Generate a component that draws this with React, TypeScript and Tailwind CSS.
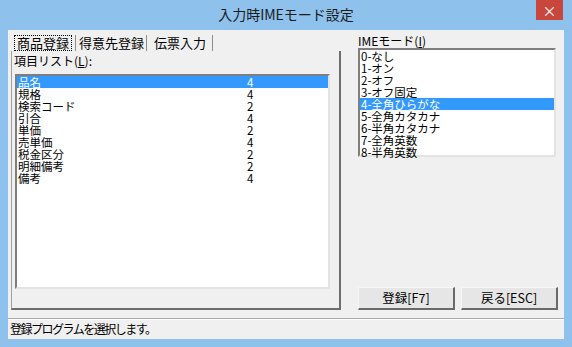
import React from "react";

const leftItems: [string, string][] = [
  ["品名", "4"],
  ["規格", "4"],
  ["検索コード", "2"],
  ["引合", "4"],
  ["単価", "2"],
  ["売単価", "4"],
  ["税金区分", "2"],
  ["明細備考", "2"],
  ["備考", "4"],
];

const rightItems = [
  "0-なし",
  "1-オン",
  "2-オフ",
  "3-オフ固定",
  "4-全角ひらがな",
  "5-全角カタカナ",
  "6-半角カタカナ",
  "7-全角英数",
  "8-半角英数",
];

const font = { fontFamily: '"Noto Sans CJK JP", "Noto Sans", sans-serif' };

export default function App() {
  return (
    <div
      className="w-[572px] h-[347px] bg-[#8ec1ec] flex flex-col overflow-hidden text-black"
      style={font}
    >
      {/* title bar */}
      <div className="h-[30px] flex items-start relative">
        <div className="flex-1 h-[28px] flex items-center justify-center text-[14px] text-[#1b1b1b]">
          入力時IMEモード設定
        </div>
        <div className="absolute right-[9px] top-0 w-[27px] h-[20px] bg-[#c9463d] flex items-center justify-center text-white text-[14px] leading-none">
          ×
        </div>
      </div>

      {/* client */}
      <div className="mx-[8px] h-[309px] bg-[#f0f0f0] flex flex-col">
        <div className="h-[288px] flex">
          {/* left column */}
          <div className="ml-[3px] w-[330px] pt-[5px] flex flex-col">
            <div className="h-[16px] flex pl-[3px] text-[13px] leading-[14px]">
              <div className="w-[62px] h-[16px] border-r border-[#8c8c8c] flex items-center pr-[2px]">
                <span className="border border-dotted border-black px-[2px] h-[16px] flex items-center">
                  商品登録
                </span>
              </div>
              <div className="w-[71px] h-[16px] border-r border-[#8c8c8c] flex items-center pl-[3px]">
                得意先登録
              </div>
              <div className="w-[66px] h-[16px] border-r border-[#8c8c8c] flex items-center pl-[7px]">
                伝票入力
              </div>
            </div>
            <div className="h-[259px] border-l border-[#a0a0a0] border-r-2 border-r-[#6d6d6d] border-b-2 border-b-[#6d6d6d] flex flex-col">
              <div className="pt-[3px] pl-[2px] h-[23px] text-[12px] leading-[13px]">
                項目リスト(<span className="underline">L</span>):
              </div>
              <div className="ml-[3px] w-[315px] h-[215px] bg-white border-2 border-t-[#7e7e7e] border-l-[#7e7e7e] border-r-[#e3e3e3] border-b-[#e3e3e3] text-[11.5px] leading-[12px]">
                {leftItems.map(([n, v], i) => (
                  <div
                    key={n}
                    className={
                      i === 0
                        ? "h-[12px] flex bg-[#3399ff] text-white"
                        : "h-[12px] flex"
                    }
                  >
                    <span className="w-[230px] pl-[1px]">{n}</span>
                    <span>{v}</span>
                  </div>
                ))}
              </div>
            </div>
          </div>

          {/* right column */}
          <div className="ml-[17px] pt-[5px] flex flex-col">
            <div className="h-[13px] text-[12px] leading-[12px]">
              IMEモード(<span className="underline">I</span>)
            </div>
            <div className="w-[198px] h-[109px] bg-white border-2 border-t-[#7e7e7e] border-l-[#7e7e7e] border-r-[#e3e3e3] border-b-[#e3e3e3] text-[11.5px] leading-[12px]">
              {rightItems.map((t, i) => (
                <div
                  key={t}
                  className={
                    i === 4
                      ? "h-[12px] pl-[1px] bg-[#3399ff] text-white"
                      : "h-[12px] pl-[1px]"
                  }
                >
                  {t}
                </div>
              ))}
            </div>
            <div className="mt-[130px] flex gap-[6px]">
              <div className="w-[97px] h-[23px] bg-[#e6e6e6] border border-t-[#f6f6f6] border-l-[#f6f6f6] border-r-2 border-b-2 border-r-[#6a6a6a] border-b-[#6a6a6a] flex items-center justify-center text-[12.5px]">
                登録[F7]
              </div>
              <div className="w-[97px] h-[23px] bg-[#e6e6e6] border border-t-[#f6f6f6] border-l-[#f6f6f6] border-r-2 border-b-2 border-r-[#6a6a6a] border-b-[#6a6a6a] flex items-center justify-center text-[12.5px]">
                戻る[ESC]
              </div>
            </div>
          </div>
        </div>

        {/* status bar */}
        <div className="flex-1 border-t border-[#a8a8a8] shadow-[inset_0_1px_0_#ffffff] pt-[3px] pl-[2px] text-[12px] leading-[14px] tracking-[-1.5px]">
          登録プログラムを選択します。
        </div>
      </div>
    </div>
  );
}
